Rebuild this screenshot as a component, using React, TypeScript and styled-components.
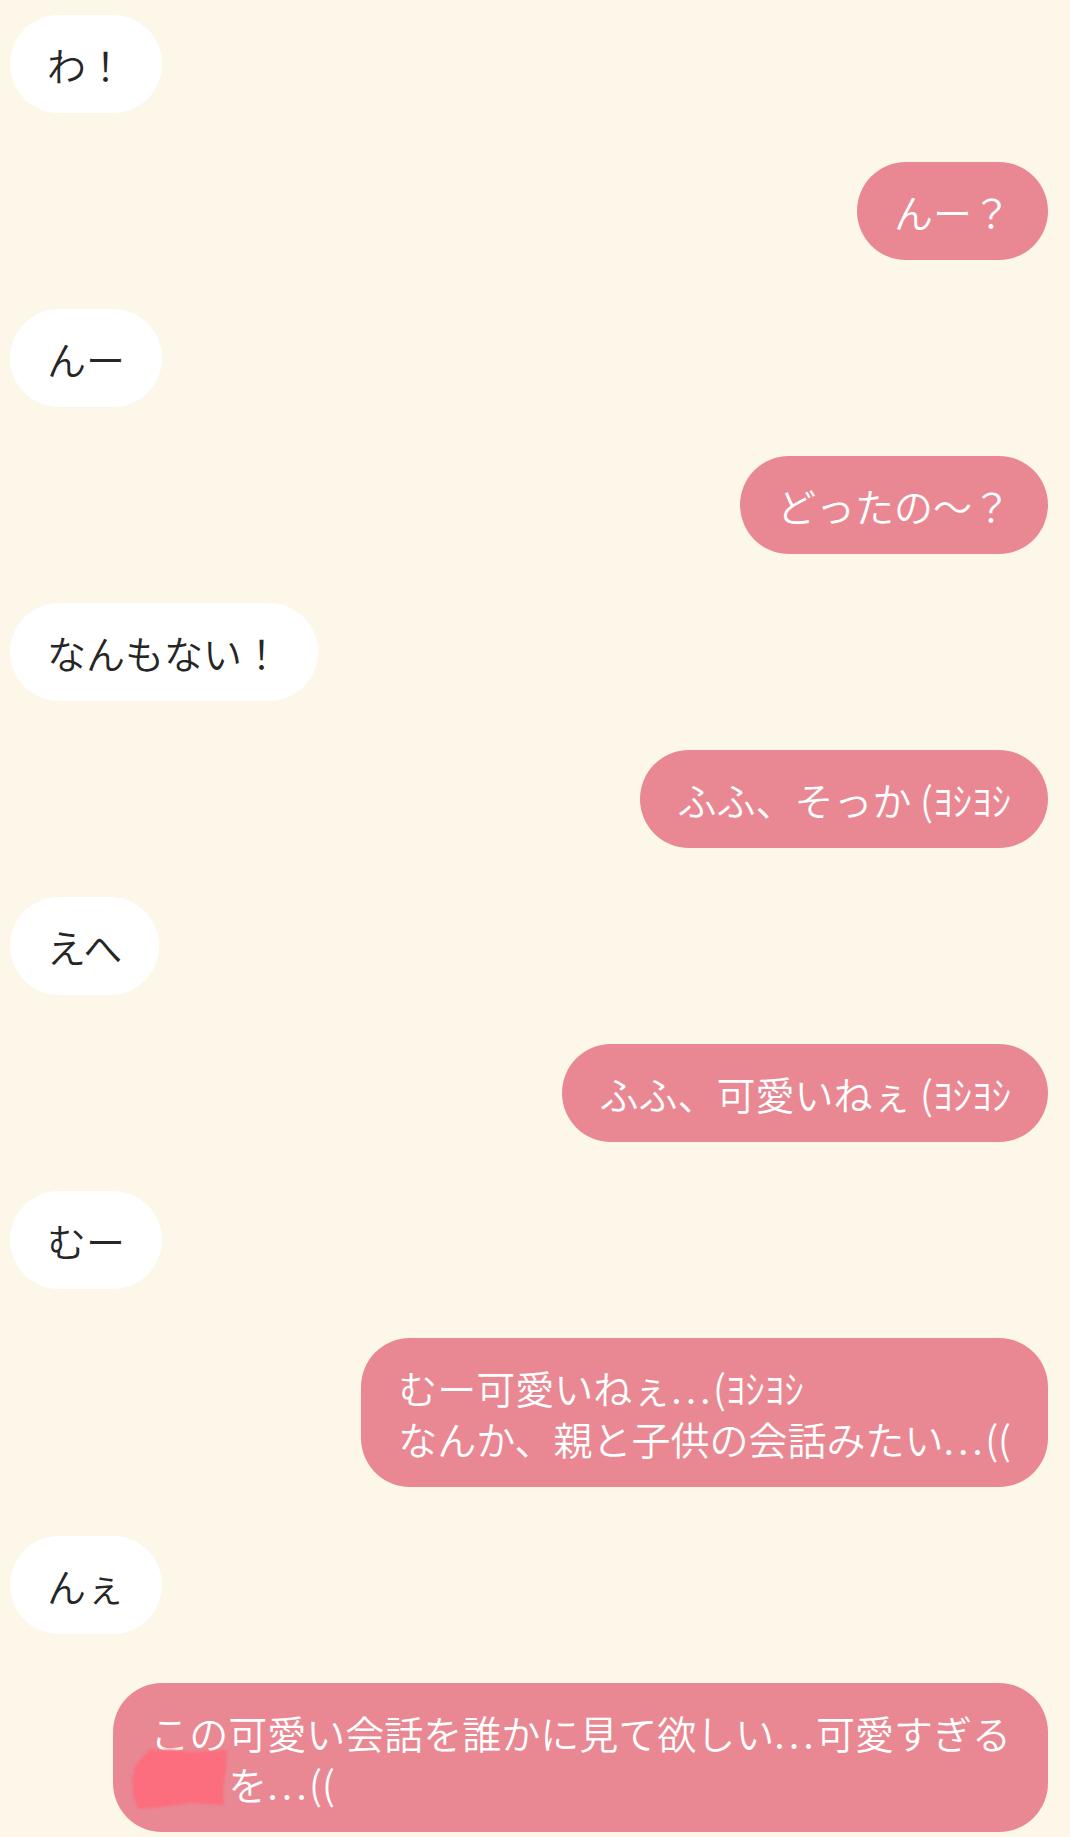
import React from "react";
import styled, { createGlobalStyle } from "styled-components";

const GlobalStyle = createGlobalStyle`
  html, body {
    margin: 0;
    padding: 0;
    background: #fdf7e9;
  }
  body {
    font-family: "Noto Sans CJK JP", "Noto Sans", sans-serif;
    -webkit-font-smoothing: antialiased;
  }
`;

const Feed = styled.main`
  box-sizing: border-box;
  width: 1070px;
  min-height: 1837px;
  display: flex;
  flex-direction: column;
  gap: 49px;
  padding: 15px 22px 5px 10px;
  background: #fdf7e9;
`;

const Row = styled.div<{ $me: boolean }>`
  display: flex;
  justify-content: ${(p) => (p.$me ? "flex-end" : "flex-start")};
`;

const Bubble = styled.div<{ $me: boolean }>`
  padding: 23.5px 37px;
  border-radius: 49px;
  font-size: 39px;
  line-height: 51px;
  font-weight: 350;
  white-space: nowrap;
  background: ${(p) => (p.$me ? "#e98893" : "#ffffff")};
  color: ${(p) => (p.$me ? "#ffffff" : "#262626")};
`;

const Dots = styled.span`
  letter-spacing: 0.1em;
  margin-right: -0.04em;
`;

const Hidden = styled.span`
  position: relative;
  display: inline-block;
  width: 2em;
  height: 1em;
  vertical-align: baseline;
`;

const Scribble = styled.svg`
  position: absolute;
  left: -20px;
  top: -14px;
  width: 100px;
  height: 64px;
  overflow: visible;
`;

const NameScribble = () => (
  <Hidden>
    <Scribble viewBox="0 0 100 64" aria-hidden="true">
      <defs>
        <filter id="soft" x="-20%" y="-20%" width="140%" height="140%">
          <feGaussianBlur stdDeviation="1.6" />
        </filter>
      </defs>
      <path
        d="M22 4 L40 2 L60 5 L97 3 L96 22 L93 44 L94 58 L60 56 L30 60 L8 62 L3 48 L2 30 L6 22 L14 10 Z"
        fill="#fc6d7d"
        filter="url(#soft)"
      />
      <path
        d="M6 22 L22 4"
        stroke="#fc6d7d"
        strokeWidth="5"
        strokeLinecap="round"
        filter="url(#soft)"
      />
    </Scribble>
  </Hidden>
);

const E = () => <Dots>...</Dots>;

type Msg = { me: boolean; lines: React.ReactNode[] };

const messages: Msg[] = [
  { me: false, lines: ["わ！"] },
  { me: true, lines: ["んー？"] },
  { me: false, lines: ["んー"] },
  { me: true, lines: ["どったの〜？"] },
  { me: false, lines: ["なんもない！"] },
  { me: true, lines: ["ふふ、そっか (ﾖｼﾖｼ"] },
  { me: false, lines: ["えへ"] },
  { me: true, lines: ["ふふ、可愛いねぇ (ﾖｼﾖｼ"] },
  { me: false, lines: ["むー"] },
  {
    me: true,
    lines: [
      <>
        むー可愛いねぇ<E />(ﾖｼﾖｼ
      </>,
      <>
        なんか、親と子供の会話みたい<E />((
      </>,
    ],
  },
  { me: false, lines: ["んぇ"] },
  {
    me: true,
    lines: [
      <>
        この可愛い会話を誰かに見て欲しい<E />可愛すぎる
      </>,
      <>
        <NameScribble />
        を<E />((
      </>,
    ],
  },
];

export default function App() {
  return (
    <>
      <GlobalStyle />
      <Feed>
        {messages.map((m, i) => (
          <Row key={i} $me={m.me}>
            <Bubble $me={m.me}>
              {m.lines.map((l, j) => (
                <React.Fragment key={j}>
                  {j > 0 && <br />}
                  {l}
                </React.Fragment>
              ))}
            </Bubble>
          </Row>
        ))}
      </Feed>
    </>
  );
}
